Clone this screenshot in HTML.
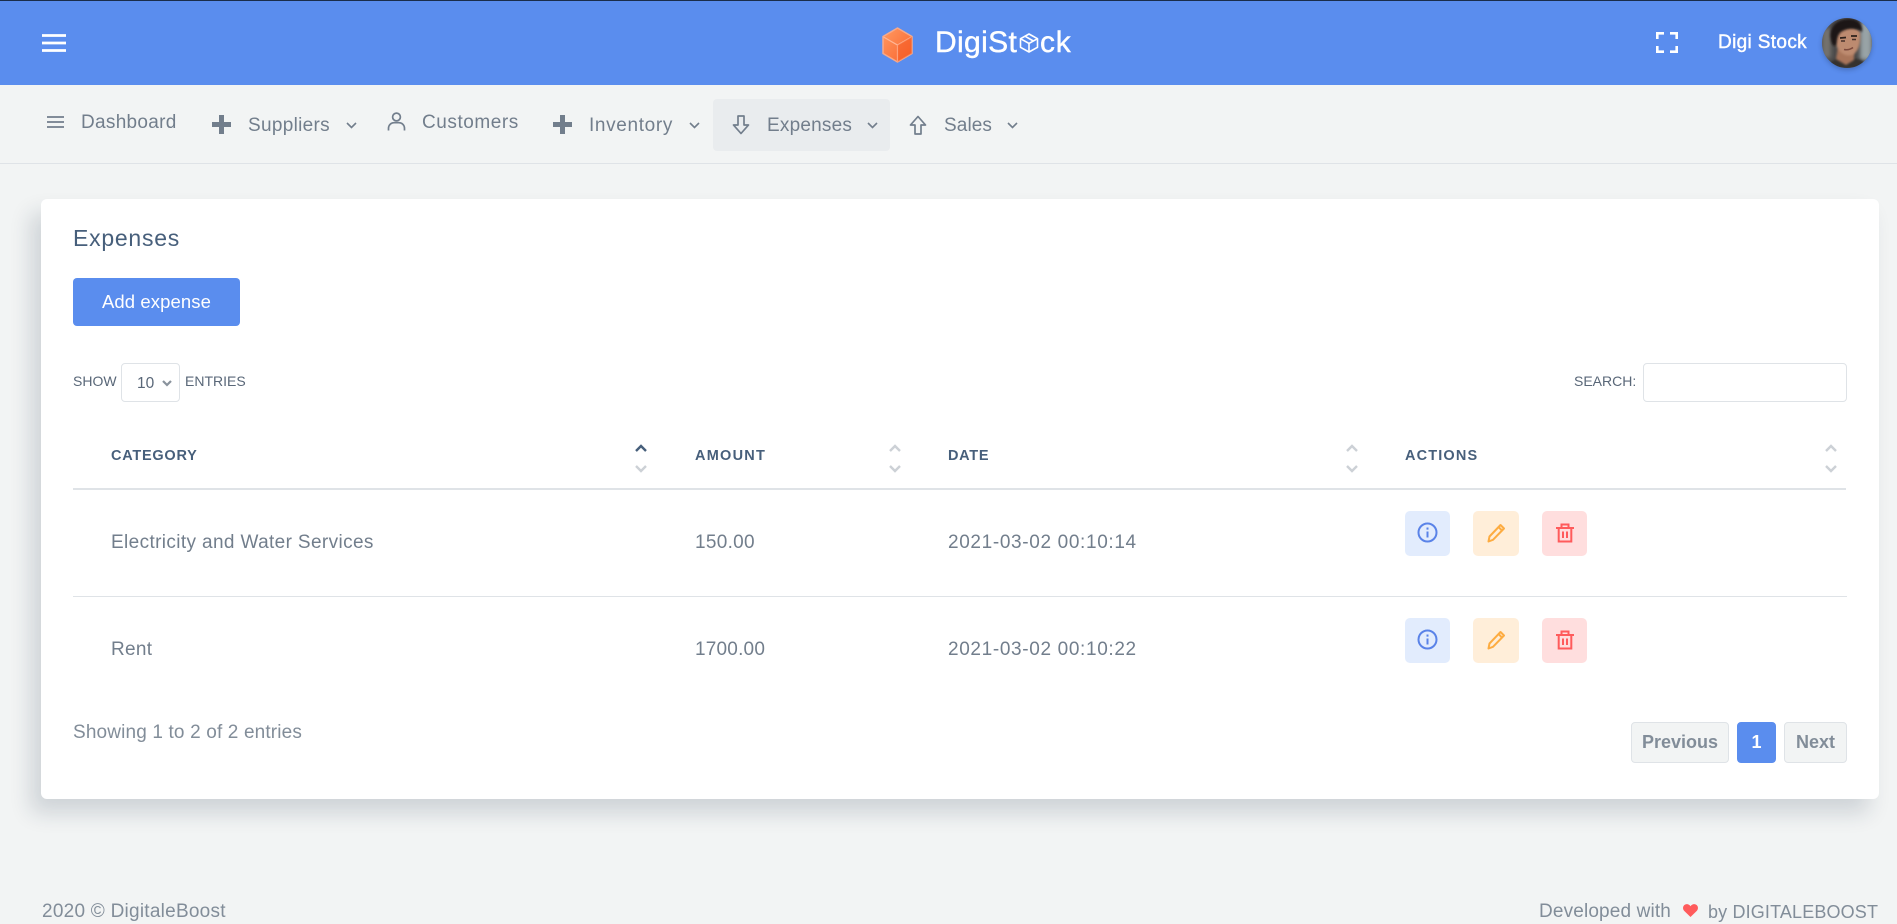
<!DOCTYPE html>
<html lang="en">
<head>
<meta charset="utf-8">
<title>DigiStock - Expenses</title>
<style>
html,body{margin:0;padding:0;width:1897px;height:921px;overflow:hidden;background:#f2f4f4;font-family:"Liberation Sans",sans-serif;color:#727e8c}
.a{position:absolute}
.t{position:absolute;white-space:nowrap;line-height:24px;height:24px;font-size:19px}
svg{position:absolute;overflow:visible}
#hd{left:0;top:0;width:1897px;height:85px;background:#5a8dee;border-top:1px solid #1a2d4b;box-sizing:border-box}
#nav{left:0;top:85px;width:1897px;height:79px;border-bottom:1px solid #dfe3e7;box-sizing:border-box}
#card{left:41px;top:199px;width:1838px;height:600px;background:#fff;border-radius:6px;box-shadow:-10px 14px 22px 0 rgba(25,42,70,.16)}
.th{font-size:14.5px;font-weight:bold;color:#475f7b}
.btn{position:absolute;width:45px;height:45px;border-radius:5px}
.pg{position:absolute;top:722px;height:41px;box-sizing:border-box;border:1px solid #dfe3e7;background:#f2f4f4;border-radius:4px;text-align:center;line-height:39px;font-weight:bold;font-size:18px;color:#828d99}
</style>
</head>
<body>
<div class="a" id="hd"></div>
<div class="a" id="nav"></div>

<!-- header -->
<svg style="left:42px;top:34px" width="24" height="18" viewBox="0 0 24 18"><path d="M0 1.5H24M0 9H24M0 16.5H24" stroke="#fff" stroke-width="2.8" fill="none"/></svg>

<svg style="left:882px;top:27px" width="31" height="36" viewBox="0 0 31 36">
<defs><linearGradient id="cb" x1="0" y1="0" x2="1" y2="1"><stop offset="0" stop-color="#ff9a62"/><stop offset="1" stop-color="#f9612b"/></linearGradient></defs>
<path d="M15.5 1L30 9.5V26.5L15.5 35L1 26.5V9.5Z" fill="url(#cb)" stroke="#f7a98a" stroke-width="1.5" stroke-linejoin="round"/>
<path d="M1.5 10L15.5 18L29.5 10M15.5 18V34.5" fill="none" stroke="#ffb696" stroke-width="1.2"/>
<path d="M15.5 18L30 9.5V26.5L15.5 35Z" fill="#f4571f" opacity=".45"/>
</svg>
<div class="t" style="left:935px;top:31px;font-size:30px;line-height:24px;letter-spacing:.35px;color:#fff;-webkit-text-stroke:.4px #fff">DigiSt</div>
<svg style="left:1019px;top:33px" width="20" height="20" viewBox="0 0 20 20" fill="none" stroke="#fff" stroke-width="1.6" stroke-linejoin="round">
<path d="M10 1L18.5 5.7V14.3L10 19L1.5 14.3V5.7Z"/>
<path d="M1.5 5.7L10 10.4L18.5 5.7M10 10.4V19M6 3.2L14.3 8"/>
</svg>
<div class="t" style="left:1040px;top:31px;font-size:30px;line-height:24px;letter-spacing:.8px;color:#fff;-webkit-text-stroke:.4px #fff">ck</div>

<svg style="left:1656px;top:32px" width="22" height="21" viewBox="0 0 22 21" fill="none" stroke="#fff" stroke-width="2.6"><path d="M8 1.3H1.3V7M14 1.3H20.7V7M8 19.7H1.3V14M14 19.7H20.7V14"/></svg>
<div class="t" style="left:1718px;top:31px;color:#fff;font-size:19px;letter-spacing:.35px;-webkit-text-stroke:.4px #fff">Digi Stock</div>

<div class="a" style="left:1822px;top:18px;width:50px;height:50px;border-radius:50%;box-shadow:0 2px 5px rgba(25,42,70,.3)"></div>
<svg style="left:1822px;top:18px" width="50" height="50" viewBox="0 0 50 50">
<defs>
<clipPath id="av"><circle cx="25" cy="25" r="25"/></clipPath>
<filter id="b1" x="-30%" y="-30%" width="160%" height="160%"><feGaussianBlur stdDeviation="1"/></filter>
<filter id="b2" x="-30%" y="-30%" width="160%" height="160%"><feGaussianBlur stdDeviation="2.2"/></filter>
</defs>
<g clip-path="url(#av)">
<rect width="50" height="50" fill="#4b4a4a"/>
<rect x="38" y="4" width="12" height="38" fill="#98a3a6" filter="url(#b2)"/>
<rect x="0" y="10" width="9" height="30" fill="#75726d" filter="url(#b2)"/>
<path d="M4 50C8 42 15 40 25 40C36 40 42 42 46 50Z" fill="#35332f" filter="url(#b1)"/>
<path d="M16 30L32 34V42L24 47L14 41Z" fill="#a9745a" filter="url(#b1)"/>
<path d="M13 13C20 8 34 8 38 14C39 24 37 34 30 37C23 39 16 34 14 26Z" fill="#bd8b70" filter="url(#b1)"/>
<path d="M9 22C6 8 16 1 27 1C36 1 41 6 40 14C34 9 25 10 19 14C15 17 15 23 14 27C12 29 10 27 9 22Z" fill="#1e1714" filter="url(#b1)"/>
<path d="M18 20L24 19.5M29 18L35 18" stroke="#2d211c" stroke-width="1.8"/>
<path d="M19 23H23M30 21.5H34" stroke="#46312a" stroke-width="1.4"/>
<path d="M22 31.5Q27 32.5 31 29.5" stroke="#7c4a3d" stroke-width="1.5" fill="none"/>
</g>
</svg>

<!-- nav -->
<div class="a" style="left:713px;top:99px;width:177px;height:52px;border-radius:4px;background:#e9ecee"></div>

<svg style="left:47px;top:116px" width="17" height="12" viewBox="0 0 17 12"><path d="M0 1H17M0 6H17M0 11H17" stroke="#727e8c" stroke-width="1.7" fill="none"/></svg>
<div class="t" style="left:81px;top:111px;letter-spacing:.3px">Dashboard</div>

<svg style="left:212px;top:115px" width="19" height="19" viewBox="0 0 19 19"><path d="M7 0H12V7H19V12H12V19H7V12H0V7H7Z" fill="#727e8c"/></svg>
<div class="t" style="left:248px;top:114px;letter-spacing:.3px">Suppliers</div>
<svg style="left:346px;top:122px" width="11" height="7" viewBox="0 0 11 7"><path d="M1 1L5.5 5.5L10 1" fill="none" stroke="#727e8c" stroke-width="1.6"/></svg>

<svg style="left:387px;top:112px" width="19" height="19" viewBox="0 0 19 19" fill="none" stroke="#727e8c" stroke-width="1.7"><circle cx="9.5" cy="5" r="3.9"/><path d="M1.5 18.5V16.5C1.5 13 4 10.7 7 10.7H12C15 10.7 17.5 13 17.5 16.5V18.5"/></svg>
<div class="t" style="left:422px;top:111px;letter-spacing:.55px">Customers</div>

<svg style="left:553px;top:115px" width="19" height="19" viewBox="0 0 19 19"><path d="M7 0H12V7H19V12H12V19H7V12H0V7H7Z" fill="#727e8c"/></svg>
<div class="t" style="left:589px;top:114px;letter-spacing:.65px">Inventory</div>
<svg style="left:689px;top:122px" width="11" height="7" viewBox="0 0 11 7"><path d="M1 1L5.5 5.5L10 1" fill="none" stroke="#727e8c" stroke-width="1.6"/></svg>

<svg style="left:732px;top:115px" width="18" height="20" viewBox="0 0 18 20"><path d="M6 1H12V10H16.5L9 18.5L1.5 10H6Z" fill="none" stroke="#727e8c" stroke-width="1.7" stroke-linejoin="round"/></svg>
<div class="t" style="left:767px;top:114px;letter-spacing:.2px">Expenses</div>
<svg style="left:867px;top:122px" width="11" height="7" viewBox="0 0 11 7"><path d="M1 1L5.5 5.5L10 1" fill="none" stroke="#727e8c" stroke-width="1.6"/></svg>

<svg style="left:909px;top:115px" width="18" height="20" viewBox="0 0 18 20"><path d="M6 19H12V10H16.5L9 1.5L1.5 10H6Z" fill="none" stroke="#727e8c" stroke-width="1.7" stroke-linejoin="round"/></svg>
<div class="t" style="left:944px;top:114px;letter-spacing:.1px">Sales</div>
<svg style="left:1007px;top:122px" width="11" height="7" viewBox="0 0 11 7"><path d="M1 1L5.5 5.5L10 1" fill="none" stroke="#727e8c" stroke-width="1.6"/></svg>

<!-- card -->
<div class="a" id="card"></div>
<div class="t" style="left:73px;top:226px;font-size:23px;letter-spacing:.75px;color:#475f7b">Expenses</div>
<div class="a" style="left:73px;top:278px;width:167px;height:48px;background:#5a8dee;border-radius:4px;color:#fff;font-size:18.5px;letter-spacing:.1px;text-align:center;line-height:48px">Add expense</div>

<div class="t" style="left:73px;top:369px;font-size:14px;color:#596778">SHOW</div>
<div class="a" style="left:121px;top:363px;width:59px;height:39px;box-sizing:border-box;border:1px solid #dfe3e7;border-radius:4px;background:#fff"></div>
<div class="t" style="left:137px;top:372px;font-size:15.5px;color:#596778">10</div>
<svg style="left:162px;top:380px" width="10" height="7" viewBox="0 0 10 7"><path d="M1 1L5 5L9 1" fill="none" stroke="#8a939d" stroke-width="2.2"/></svg>
<div class="t" style="left:185px;top:369px;font-size:14px;color:#596778">ENTRIES</div>

<div class="t" style="left:1574px;top:369px;font-size:14px;color:#596778">SEARCH:</div>
<div class="a" style="left:1643px;top:363px;width:204px;height:39px;box-sizing:border-box;border:1px solid #dfe3e7;border-radius:4px;background:#fff"></div>

<!-- table head -->
<div class="t th" style="left:111px;top:444px;letter-spacing:.75px">CATEGORY</div>
<div class="t th" style="left:695px;top:444px;letter-spacing:1.25px">AMOUNT</div>
<div class="t th" style="left:948px;top:444px;letter-spacing:.7px">DATE</div>
<div class="t th" style="left:1405px;top:444px;letter-spacing:1.15px">ACTIONS</div>

<svg style="left:0;top:0" width="1897" height="921" viewBox="0 0 1897 921" fill="none" stroke-width="2.4">
<path d="M636 451L641 446L646 451" stroke="#475f7b"/>
<path d="M636 466L641 471L646 466" stroke="#ccd1d6"/>
<path d="M890 451L895 446L900 451M890 466L895 471L900 466" stroke="#ccd1d6"/>
<path d="M1347 451L1352 446L1357 451M1347 466L1352 471L1357 466" stroke="#ccd1d6"/>
<path d="M1826 451L1831 446L1836 451M1826 466L1831 471L1836 466" stroke="#ccd1d6"/>
</svg>

<div class="a" style="left:73px;top:488px;width:1773px;height:2px;background:#dfe3e7"></div>
<div class="a" style="left:73px;top:596px;width:1774px;height:1px;background:#dfe3e7"></div>

<!-- rows -->
<div class="t" style="left:111px;top:531px;letter-spacing:.37px">Electricity and Water Services</div>
<div class="t" style="left:695px;top:531px;letter-spacing:.3px">150.00</div>
<div class="t" style="left:948px;top:531px;letter-spacing:.65px">2021-03-02 00:10:14</div>
<div class="t" style="left:111px;top:638px;letter-spacing:.3px">Rent</div>
<div class="t" style="left:695px;top:638px;letter-spacing:.2px">1700.00</div>
<div class="t" style="left:948px;top:638px;letter-spacing:.65px">2021-03-02 00:10:22</div>

<!-- row 1 actions -->
<div class="btn" style="left:1405px;top:511px;background:#e2ecfd"></div>
<svg style="left:1417px;top:522px" width="21" height="21" viewBox="0 0 21 21" fill="none" stroke="#5a83e8" stroke-width="2"><circle cx="10.5" cy="10.5" r="9"/><path d="M10.5 9.5V15.5M10.5 5.5V7.6"/></svg>
<div class="btn" style="left:1473px;top:511px;width:46px;background:#ffeed9"></div>
<svg style="left:1487px;top:523px" width="19" height="20" viewBox="0 0 19 20" fill="none" stroke="#fdac41" stroke-width="2" stroke-linejoin="round"><path d="M1.5 18.5L2.5 13.5L13.5 2L17 5.5L6 16.8Z"/><path d="M11.5 4L15 7.5"/></svg>
<div class="btn" style="left:1542px;top:511px;background:#ffdede"></div>
<svg style="left:1556px;top:523px" width="18" height="20" viewBox="0 0 18 20" fill="none" stroke="#ff5b5c" stroke-width="2"><path d="M0 5H18M5.5 5V1.5H12.5V5M2.7 5V18.5H15.3V5M7 8.5V15M11 8.5V15"/></svg>

<!-- row 2 actions -->
<div class="btn" style="left:1405px;top:618px;background:#e2ecfd"></div>
<svg style="left:1417px;top:629px" width="21" height="21" viewBox="0 0 21 21" fill="none" stroke="#5a83e8" stroke-width="2"><circle cx="10.5" cy="10.5" r="9"/><path d="M10.5 9.5V15.5M10.5 5.5V7.6"/></svg>
<div class="btn" style="left:1473px;top:618px;width:46px;background:#ffeed9"></div>
<svg style="left:1487px;top:630px" width="19" height="20" viewBox="0 0 19 20" fill="none" stroke="#fdac41" stroke-width="2" stroke-linejoin="round"><path d="M1.5 18.5L2.5 13.5L13.5 2L17 5.5L6 16.8Z"/><path d="M11.5 4L15 7.5"/></svg>
<div class="btn" style="left:1542px;top:618px;background:#ffdede"></div>
<svg style="left:1556px;top:630px" width="18" height="20" viewBox="0 0 18 20" fill="none" stroke="#ff5b5c" stroke-width="2"><path d="M0 5H18M5.5 5V1.5H12.5V5M2.7 5V18.5H15.3V5M7 8.5V15M11 8.5V15"/></svg>

<!-- info / pagination -->
<div class="t" style="left:73px;top:721px;letter-spacing:.15px;color:#828d99">Showing 1 to 2 of 2 entries</div>
<div class="pg" style="left:1631px;width:98px">Previous</div>
<div class="pg" style="left:1737px;width:39px;background:#5a8dee;border-color:#5a8dee;color:#fff">1</div>
<div class="pg" style="left:1784px;width:63px">Next</div>

<!-- footer -->
<div class="t" style="left:42px;top:900px;letter-spacing:.25px;color:#828d99">2020 © DigitaleBoost</div>
<div class="t" style="left:1539px;top:900px;letter-spacing:.15px;color:#828d99">Developed with</div>
<svg style="left:1683px;top:904px" width="15" height="13" viewBox="0 0 15 13"><path d="M7.5 13L1.2 6.9C-.6 5-.3 1.8 2 .6C4 -.4 6.4 .4 7.5 2.3C8.6 .4 11 -.4 13 .6C15.3 1.8 15.6 5 13.8 6.9Z" fill="#ff5b5c"/></svg>
<div class="t" style="left:1708px;top:900px;font-size:18px;letter-spacing:.15px;color:#828d99">by DIGITALEBOOST</div>
</body>
</html>
